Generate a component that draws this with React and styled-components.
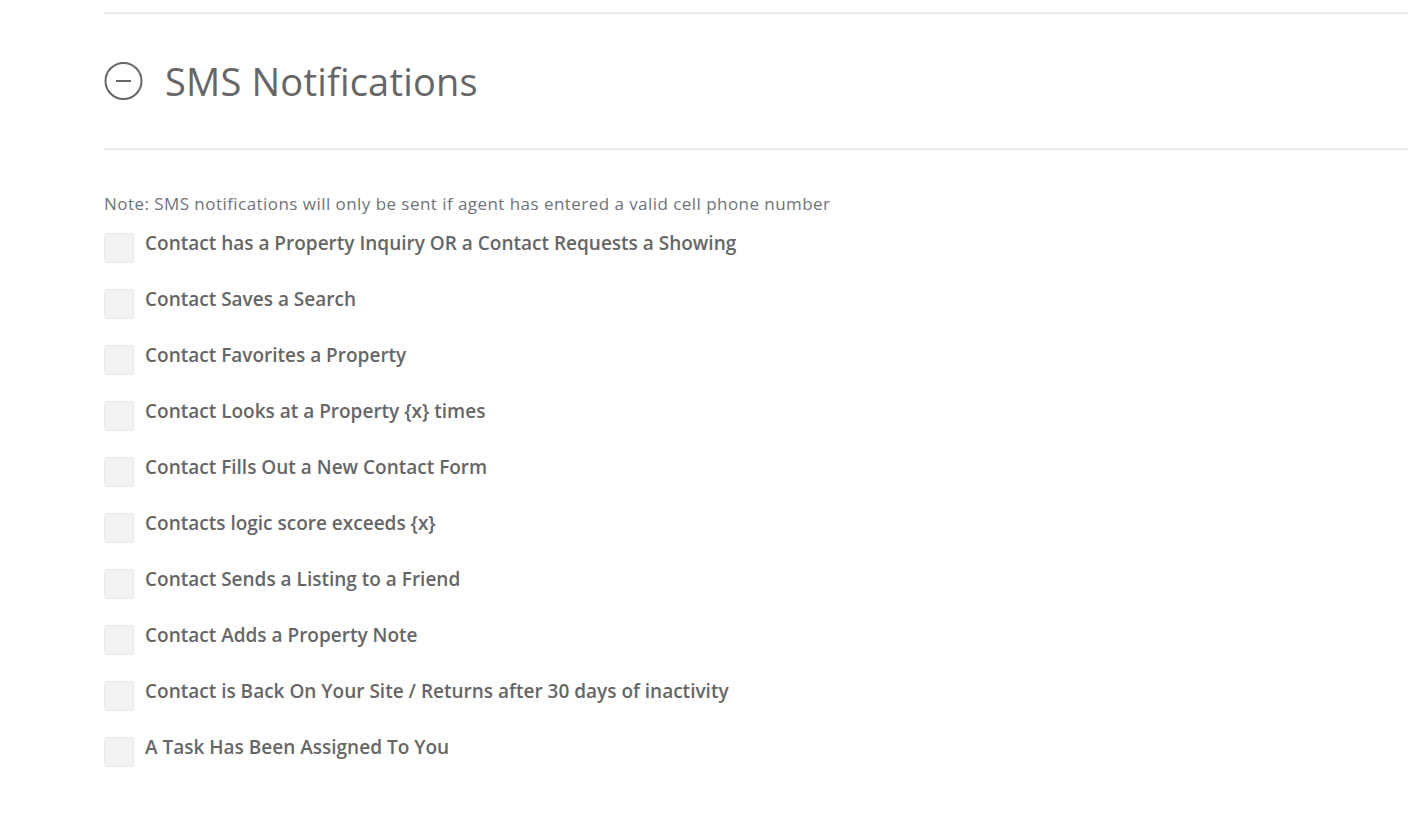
import styled, { createGlobalStyle } from "styled-components";

const GlobalStyle = createGlobalStyle`
  body {
    margin: 0;
    background: #ffffff;
    font-family: "Open Sans", "Liberation Sans", sans-serif;
  }
`;

const Page = styled.div`
  padding: 12px 0 40px 104px;
`;

const Section = styled.section`
  border-top: 2px solid #ebebeb;
`;

const Header = styled.div`
  display: flex;
  align-items: center;
  gap: 21px;
  height: 134px;
  border-bottom: 2px solid #ebebeb;
`;

const Title = styled.h2`
  margin: 0;
  font-size: 38px;
  font-weight: 400;
  color: #666666;
  letter-spacing: 0.2px;
`;

const Body = styled.div`
  padding-top: 43px;
`;

const Note = styled.p`
  margin: 0 0 16px;
  font-size: 17px;
  color: #6e747a;
  line-height: 22px;
  letter-spacing: 0.45px;
`;

const List = styled.ul`
  list-style: none;
  margin: 0;
  padding: 0;
  display: flex;
  flex-direction: column;
  gap: 24px;
`;

const Row = styled.li`
  display: flex;
  align-items: flex-start;
  gap: 11px;
`;

const Box = styled.span`
  flex: none;
  width: 28px;
  height: 28px;
  margin-top: 2px;
  border: 1px solid #e7e8ea;
  border-radius: 3px;
  background: #f2f3f5;
`;

const Label = styled.label`
  font-size: 19px;
  font-weight: 600;
  color: #666666;
  line-height: 24px;
`;

const MinusCircle = () => (
  <svg width="40" height="40" viewBox="0 0 40 40" fill="none">
    <circle cx="19.5" cy="20" r="18" stroke="#666" strokeWidth="2" />
    <line x1="12" y1="20" x2="27" y2="20" stroke="#666" strokeWidth="2" />
  </svg>
);

const items = [
  "Contact has a Property Inquiry OR a Contact Requests a Showing",
  "Contact Saves a Search",
  "Contact Favorites a Property",
  "Contact Looks at a Property {x} times",
  "Contact Fills Out a New Contact Form",
  "Contacts logic score exceeds {x}",
  "Contact Sends a Listing to a Friend",
  "Contact Adds a Property Note",
  "Contact is Back On Your Site / Returns after 30 days of inactivity",
  "A Task Has Been Assigned To You",
];

export default function App() {
  return (
    <>
      <GlobalStyle />
      <Page>
        <Section>
          <Header>
            <MinusCircle />
            <Title>SMS Notifications</Title>
          </Header>
          <Body>
            <Note>
              Note: SMS notifications will only be sent if agent has entered a
              valid cell phone number
            </Note>
            <List>
              {items.map((text) => (
                <Row key={text}>
                  <Box />
                  <Label>{text}</Label>
                </Row>
              ))}
            </List>
          </Body>
        </Section>
      </Page>
    </>
  );
}
